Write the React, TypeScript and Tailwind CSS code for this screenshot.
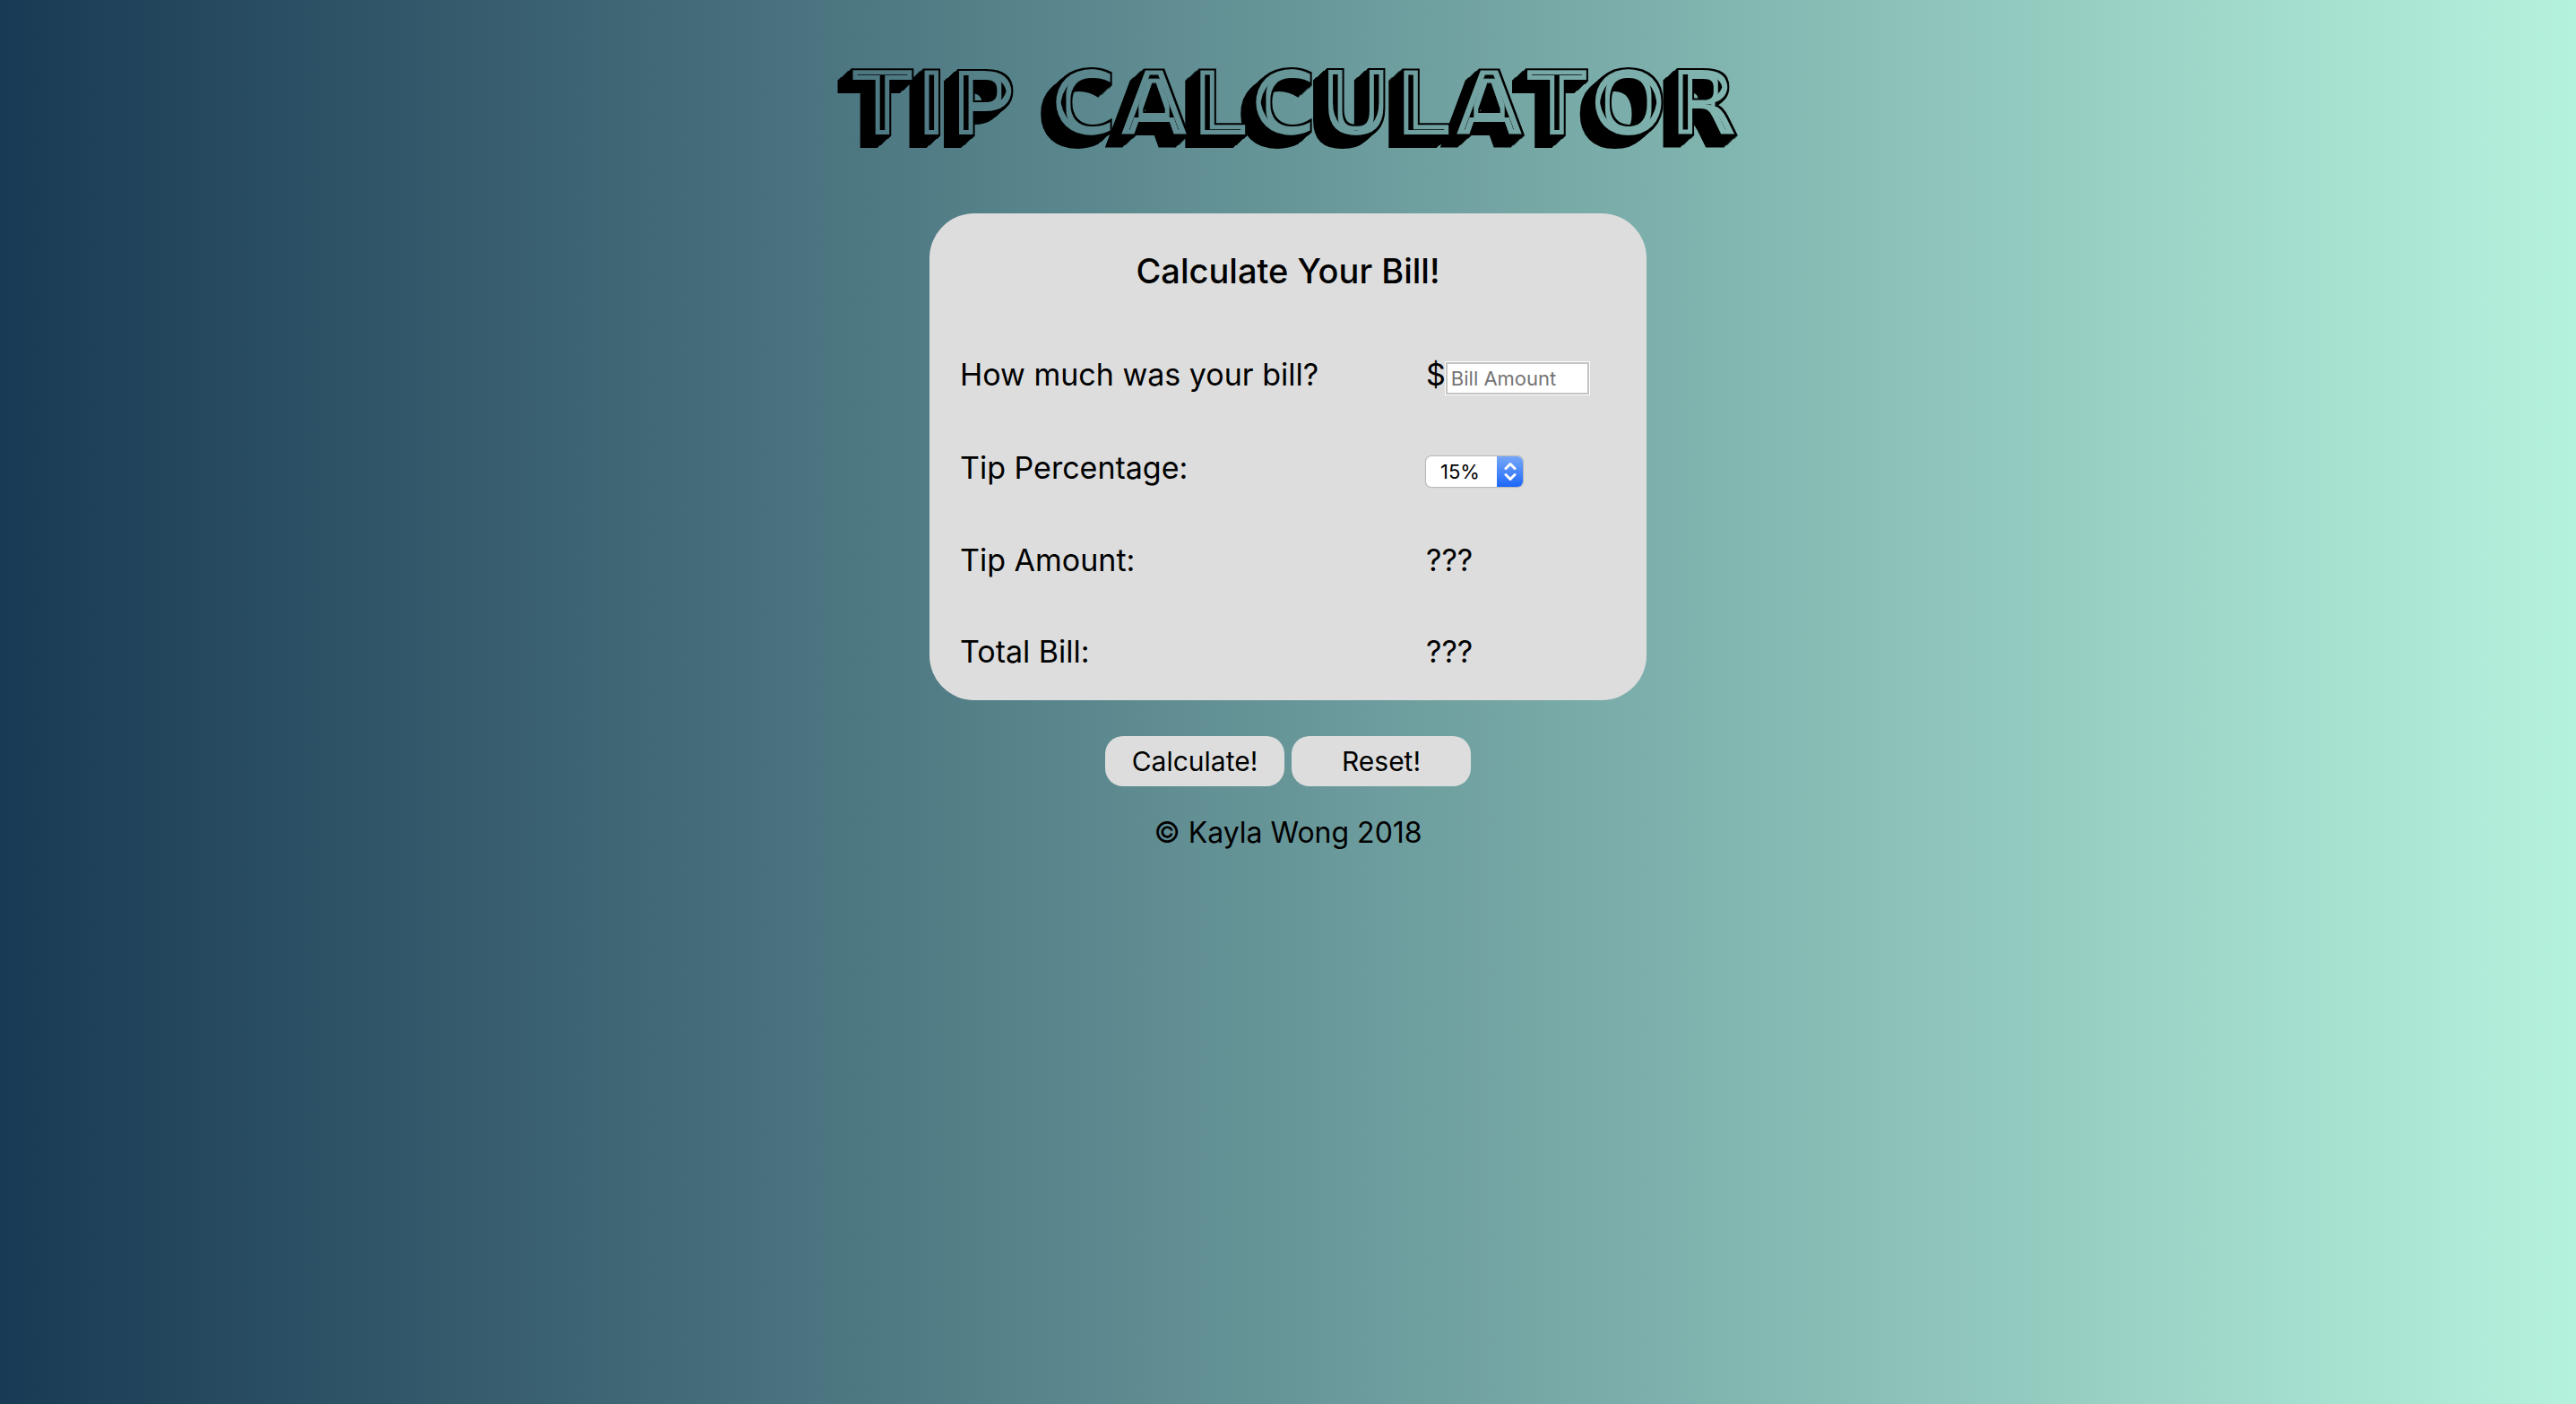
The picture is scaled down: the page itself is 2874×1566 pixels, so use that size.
import { useState } from "react";

function ShadeFilter() {
  return (
    <svg width="0" height="0" className="absolute" aria-hidden="true">
      <filter id="shade" x="-5%" y="-10%" width="110%" height="130%" colorInterpolationFilters="sRGB">
        {/* extrude the letters down and to the left */}
        <feOffset in="SourceAlpha" dx="-1" dy="1" result="a" />
        <feMerge result="e1"><feMergeNode in="SourceAlpha" /><feMergeNode in="a" /></feMerge>
        <feOffset in="e1" dx="-2" dy="2" result="b" />
        <feMerge result="e2"><feMergeNode in="e1" /><feMergeNode in="b" /></feMerge>
        <feOffset in="e2" dx="-4" dy="3" result="c" />
        <feMerge result="e3"><feMergeNode in="e2" /><feMergeNode in="c" /></feMerge>
        <feOffset in="e3" dx="-8" dy="7" result="d" />
        <feMerge result="solid"><feMergeNode in="e3" /><feMergeNode in="d" /></feMerge>
        {/* cut the face out, leaving an outline and an inline */}
        <feMorphology in="SourceAlpha" operator="erode" radius="2" result="face" />
        <feMorphology in="SourceAlpha" operator="erode" radius="7" result="inline" />
        <feComposite in="face" in2="inline" operator="out" result="ring" />
        <feComposite in="solid" in2="ring" operator="out" />
      </filter>
    </svg>
  );
}

export default function App() {
  const [bill, setBill] = useState("");
  const [tip, setTip] = useState("15");
  const [result, setResult] = useState<[string, string]>(["???", "???"]);

  const calculate = () => {
    const amount = Number(bill);
    if (!amount) return;
    const t = (amount * Number(tip)) / 100;
    setResult([`$${t.toFixed(2)}`, `$${(amount + t).toFixed(2)}`]);
  };
  const reset = () => {
    setBill("");
    setTip("15");
    setResult(["???", "???"]);
  };

  return (
    <div className="flex min-h-screen flex-col items-center bg-[linear-gradient(to_right,#193a54,#b5f2dd)] font-[Inter,sans-serif] text-black">
      <ShadeFilter />
      <h1 className="mt-14 pl-4 font-['DejaVu_Sans',sans-serif] text-[104px] leading-[120px] font-bold whitespace-nowrap [filter:url(#shade)] [font-kerning:none]">
        TIP CALCULATOR
      </h1>

      <main className="mt-[62px] w-full max-w-[800px] rounded-[50px] bg-[#dddddd] px-[34px] pt-[38px] pb-[34px]">
        <h2 className="text-center text-[38px] leading-[52px] font-medium">Calculate Your Bill!</h2>
        <div className="mt-[70px] grid grid-cols-[520px_1fr] items-baseline gap-y-[62px] text-[34px] leading-10">
          <label htmlFor="bill">How much was your bill?</label>
          <div className="flex items-baseline">
            <span>$</span>
            <input
              id="bill"
              value={bill}
              onChange={(e) => setBill(e.target.value)}
              placeholder="Bill Amount"
              className="h-9 w-40 border-2 border-[#c3c3c3] bg-white px-1 text-[22px] outline-1 outline-white placeholder:text-[#757575]"
            />
          </div>
          <label htmlFor="tip">Tip Percentage:</label>
          <div className="flex items-baseline">
            <div className="relative flex">
              <select
                id="tip"
                value={tip}
                onChange={(e) => setTip(e.target.value)}
                className="h-[34px] w-[108px] appearance-none rounded-md bg-white pl-4 text-[22px] leading-8 shadow-[0_0_1px_1px_#b5b5b5]"
              >
                <option value="10">10%</option>
                <option value="15">15%</option>
                <option value="20">20%</option>
              </select>
              <span className="pointer-events-none absolute inset-y-0 right-0 flex w-[29px] items-center justify-center rounded-r-md bg-linear-to-b from-[#75a6f7] to-[#1a66f8]">
                <svg width="14" height="22" viewBox="0 0 14 22" fill="none" stroke="white" strokeWidth="3" strokeLinecap="round" strokeLinejoin="round">
                  <path d="M2 7.5 7 2.5 12 7.5M2 14.5 7 19.5 12 14.5" />
                </svg>
              </span>
            </div>
          </div>
          <span>Tip Amount:</span>
          <output>{result[0]}</output>
          <span>Total Bill:</span>
          <output>{result[1]}</output>
        </div>
      </main>

      <div className="mt-10 flex gap-2">
        <button onClick={calculate} className="h-14 w-[200px] rounded-[20px] bg-[#dddddd] text-[30px]">
          Calculate!
        </button>
        <button onClick={reset} className="h-14 w-[200px] rounded-[20px] bg-[#dddddd] text-[30px]">
          Reset!
        </button>
      </div>
      <footer className="mt-8 text-[32px] leading-10">© Kayla Wong 2018</footer>
    </div>
  );
}
